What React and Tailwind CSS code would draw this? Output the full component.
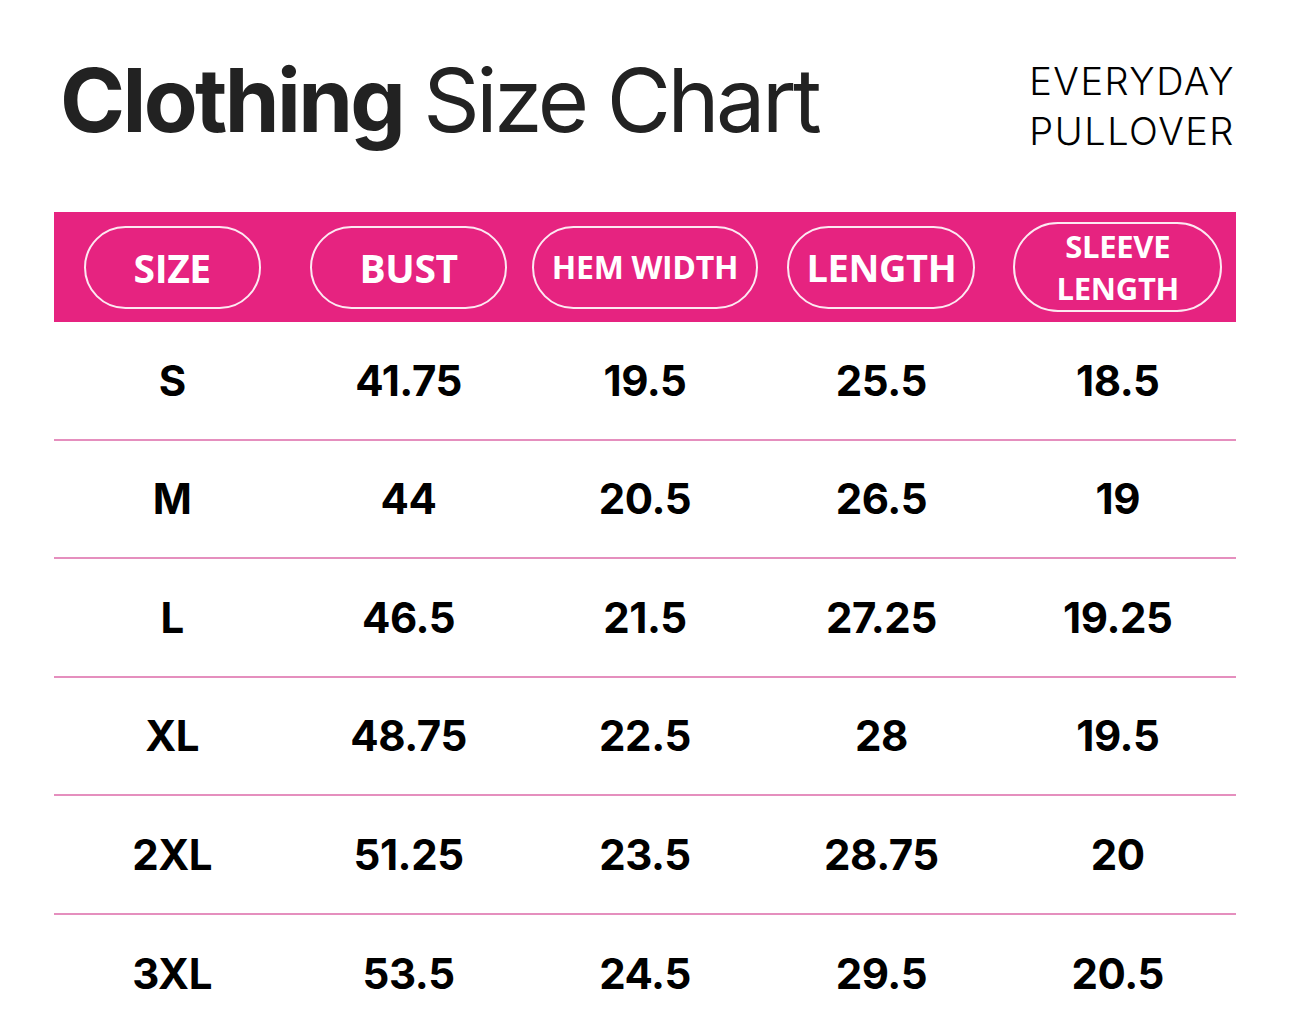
const HEADERS = [
  { label: 'SIZE', w: 'w-[177px]', h: 'h-[83px]', text: 'text-[39px]' },
  { label: 'BUST', w: 'w-[197px]', h: 'h-[83px]', text: 'text-[39px]' },
  { label: 'HEM WIDTH', w: 'w-[226px]', h: 'h-[83px]', text: 'text-[32px]' },
  { label: 'LENGTH', w: 'w-[188px]', h: 'h-[83px]', text: 'text-[38px]' },
  { label: 'SLEEVE LENGTH', w: 'w-[209px]', h: 'h-[90px]', text: 'text-[31px]', two: true },
];

const ROWS = [
  ['S', '41.75', '19.5', '25.5', '18.5'],
  ['M', '44', '20.5', '26.5', '19'],
  ['L', '46.5', '21.5', '27.25', '19.25'],
  ['XL', '48.75', '22.5', '28', '19.5'],
  ['2XL', '51.25', '23.5', '28.75', '20'],
  ['3XL', '53.5', '24.5', '29.5', '20.5'],
];

export default function App() {
  return (
    <div className="w-[1290px] h-[1030px] bg-white overflow-hidden">
      {/* Title */}
      <div className="flex items-start justify-between pl-[60px] pr-[55px] pt-[50px] h-[212px]">
        <h1 className="text-[88px] leading-none text-[#222] font-['Inter',sans-serif] mt-[6px]">
          <span className="font-bold tracking-[-0.03em]">Clothing</span>
          <span className="font-normal tracking-[-0.04em] ml-[20px]">Size Chart</span>
        </h1>
        <div className="text-right text-[38px] leading-[50px] text-black tracking-[0.04em] font-['Inter',sans-serif] font-light mt-[6px]">
          <div>EVERYDAY</div>
          <div>PULLOVER</div>
        </div>
      </div>

      {/* Table */}
      <div className="mx-[54px] w-[1182px]">
        <div className="grid grid-cols-5 h-[110px] bg-[#e62380] items-center">
          {HEADERS.map(h => (
            <div key={h.label} className="flex justify-center">
              <div
                className={`${h.w} ${h.h} rounded-full border-2 border-white/90 flex items-center justify-center text-white font-bold ${h.text} font-['Open_Sans',sans-serif] text-center tracking-[-0.01em]`}
              >
                {h.two ? (
                  <span className="leading-[42px]">SLEEVE<br />LENGTH</span>
                ) : (
                  <span className="leading-none">{h.label}</span>
                )}
              </div>
            </div>
          ))}
        </div>
        {ROWS.map((r, i) => (
          <div
            key={r[0]}
            className={`grid grid-cols-5 h-[118.5px] items-center ${i < ROWS.length - 1 ? 'border-b-2 border-[#e58fbe]' : ''}`}
          >
            {r.map((v, j) => (
              <div key={j} className="text-center text-[42px] font-bold text-black font-['Inter',sans-serif] tracking-[-0.01em]">
                {v}
              </div>
            ))}
          </div>
        ))}
      </div>
    </div>
  );
}
